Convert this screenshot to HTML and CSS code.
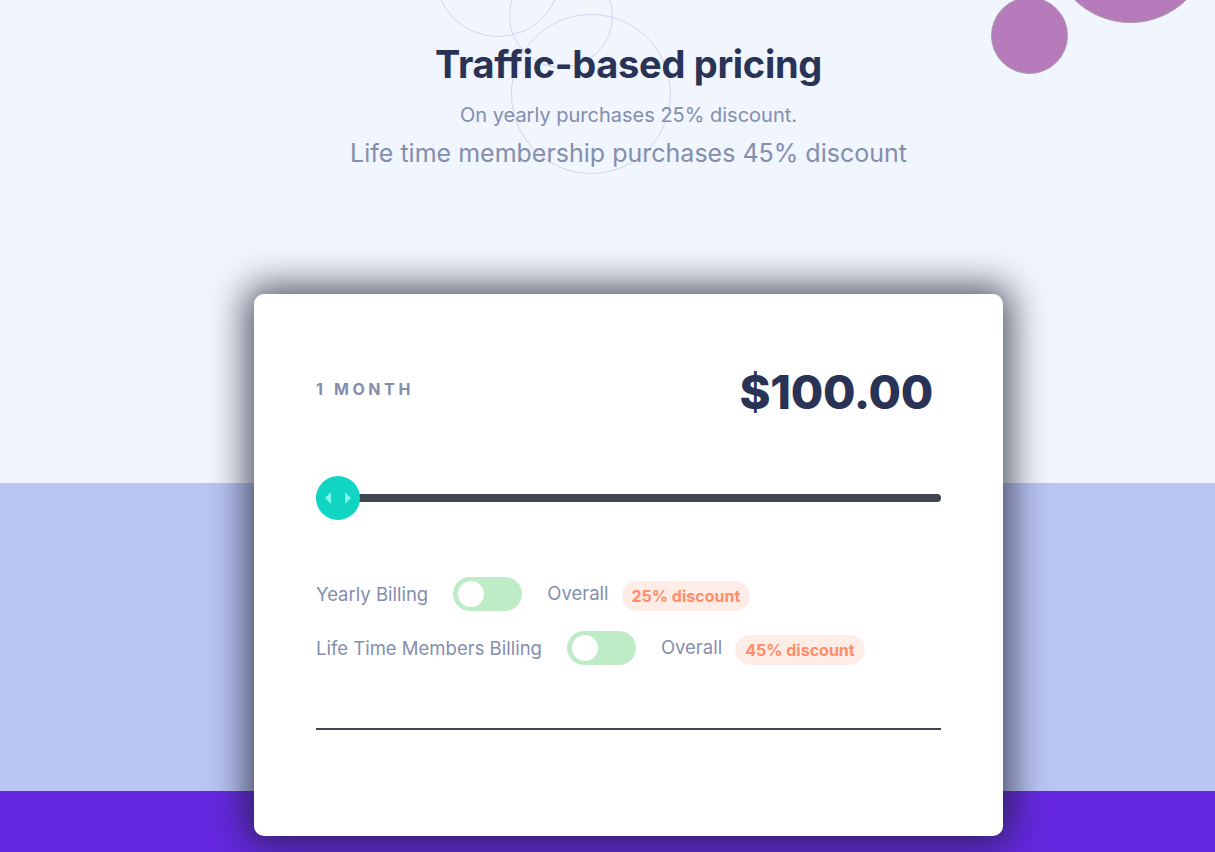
FILE: index.html
```html
<!DOCTYPE html>
<html lang="en">
<head>
    <meta charset="UTF-8">
    <meta name="viewport" content="width=device-width, initial-scale=1.0">
    <title>Interactive Pricing</title>
    <link rel="stylesheet" href="styles.css">
</head>
<body>

    <div class="decor">
        <span class="ring ring-a"></span>
        <span class="ring ring-b"></span>
        <span class="ring ring-c"></span>
        <span class="blob blob-small"></span>
        <span class="blob blob-big"></span>
    </div>

    <header class="hero">
        <h1>Traffic-based pricing</h1>
        <p class="sub">On yearly purchases 25% discount.</p>
        <p class="sub-big">Life time membership purchases 45% discount</p>
    </header>

    <main class="card">
        <div class="card-top">
            <span class="period">1 MONTH</span>
            <span class="price">$100.00</span>
        </div>

        <div class="slider">
            <div class="track"></div>
            <div class="thumb">
                <svg width="28" height="14" viewBox="0 0 28 14">
                    <path d="M7 1 L1 7 L7 13 Z" fill="#80f7ea"/>
                    <path d="M21 1 L27 7 L21 13 Z" fill="#80f7ea"/>
                </svg>
            </div>
        </div>

        <div class="billing-row">
            <span class="label">Yearly Billing</span>
            <span class="toggle"><span class="knob"></span></span>
            <span class="overall">Overall</span>
            <span class="badge">25% discount</span>
        </div>

        <div class="billing-row">
            <span class="label">Life Time Members Billing</span>
            <span class="toggle"><span class="knob"></span></span>
            <span class="overall">Overall</span>
            <span class="badge">45% discount</span>
        </div>

        <hr class="divider">
    </main>

</body>
</html>
```

FILE: styles.css
```css
body {
    margin: 0;
    padding-left: 42px;
    min-height: 852px;
    font-family: Inter, "Open Sans", sans-serif;
    background: linear-gradient(to bottom,
        #f0f5fe 0, #f0f5fe 483px,
        #bbc5f4 483px, #bbc5f4 791px,
        #6528e0 791px);
    overflow: hidden;
    position: relative;
}

/* background decoration */
.decor {
    position: absolute;
    top: 0;
    left: 0;
    width: 100%;
    height: 200px;
    pointer-events: none;
}

.ring {
    position: absolute;
    border: 1px solid #d0d5ef;
    border-radius: 50%;
}

.ring-a {
    left: 435px;
    top: -89px;
    width: 124px;
    height: 124px;
}

.ring-b {
    left: 509px;
    top: -36px;
    width: 102px;
    height: 102px;
}

.ring-c {
    left: 511px;
    top: 14px;
    width: 158px;
    height: 158px;
}

.blob {
    position: absolute;
    background-color: #b57bba;
    border: 1px solid #a79aa9;
    border-radius: 50%;
}

.blob-small {
    left: 991px;
    top: -3px;
    width: 75px;
    height: 75px;
}

.blob-big {
    left: 1050px;
    top: -138px;
    width: 159px;
    height: 159px;
}

/* header */
.hero {
    position: relative;
    text-align: center;
    padding-top: 40px;
}

h1 {
    margin: 0;
    font-size: 38px;
    line-height: 48px;
    font-weight: 700;
    color: #293356;
    letter-spacing: -0.3px;
}

.sub {
    margin: 15px 0 0;
    font-size: 20px;
    line-height: 24px;
    color: #848ead;
}

.sub-big {
    margin: 11px 0 0;
    font-size: 25px;
    line-height: 30px;
    color: #848ead;
}

/* card */
.card {
    position: relative;
    width: 749px;
    box-sizing: border-box;
    margin: 126px auto 0;
    padding: 67px 62px 106px;
    background-color: #fff;
    border-radius: 10px;
    box-shadow: 0 0 36px 8px rgba(30, 32, 50, 0.75);
}

.card-top {
    display: flex;
    justify-content: space-between;
    align-items: center;
    height: 60px;
}

.period {
    font-size: 16px;
    font-weight: 700;
    letter-spacing: 3.6px;
    color: #848ead;
    margin-top: -4px;
}

.price {
    font-size: 47px;
    font-weight: 800;
    color: #293356;
    margin-right: 8px;
    letter-spacing: -0.3px;
}

.slider {
    position: relative;
    height: 44px;
    margin-top: 55px;
    display: flex;
    align-items: center;
}

.track {
    width: 100%;
    height: 8px;
    border-radius: 4px;
    background-color: #42454f;
}

.thumb {
    position: absolute;
    left: 0;
    top: 0;
    width: 44px;
    height: 44px;
    border-radius: 50%;
    background-color: #10d5c2;
    display: flex;
    align-items: center;
    justify-content: center;
}

.billing-row {
    display: flex;
    align-items: center;
    height: 34px;
    margin-top: 57px;
    font-size: 18.5px;
    color: #848ead;
}

.billing-row + .billing-row {
    margin-top: 20px;
}

.toggle {
    width: 69px;
    height: 34px;
    border-radius: 17px;
    background-color: #bdecc6;
    margin: 0 25px;
    display: flex;
    align-items: center;
}

.knob {
    width: 26px;
    height: 26px;
    border-radius: 50%;
    background-color: #fff;
    margin-left: 5px;
}

.overall {
    margin-right: 13px;
    margin-top: -3px;
}

.badge {
    height: 30px;
    line-height: 30px;
    padding: 0 10px;
    margin-top: 4px;
    border-radius: 15px;
    background-color: #feece7;
    color: #ff8d68;
    font-size: 16px;
    font-weight: 700;
}

.divider {
    margin: 63px 0 0;
    border: none;
    height: 2px;
    background-color: #42454f;
}
```
